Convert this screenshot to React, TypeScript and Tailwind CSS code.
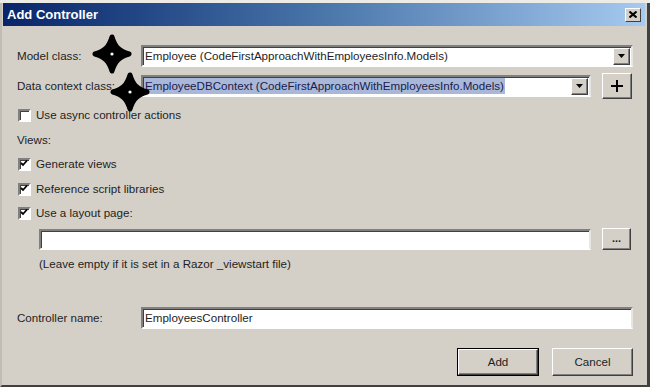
import React from "react";

const sunken =
  "bg-white border-2 border-t-[#808080] border-l-[#808080] border-b-white border-r-[#e8e6e0] shadow-[inset_1px_1px_0_#404040]";
const raised =
  "bg-[#d4d0c8] border border-t-white border-l-white border-b-[#404040] border-r-[#404040] shadow-[inset_-1px_-1px_0_#808080]";

function Arrow() {
  return (
    <div className={`${raised} w-[17px] h-[17px] flex items-center justify-center shrink-0`}>
      <svg width="7" height="4" viewBox="0 0 7 4">
        <path d="M0 0 H7 L3.5 4 Z" fill="#000" />
      </svg>
    </div>
  );
}

function Check({ checked }: { checked: boolean }) {
  return (
    <div className="w-[13px] h-[13px] bg-white border-2 border-t-[#808080] border-l-[#808080] border-b-white border-r-white shadow-[inset_1px_1px_0_#404040] flex items-center justify-center shrink-0">
      {checked && (
        <svg width="9" height="9" viewBox="0 0 9 9" className="-ml-[1px] -mt-[1px]">
          <path d="M1 4 L3 6 L7 1.5" stroke="#000" strokeWidth="1.8" fill="none" />
        </svg>
      )}
    </div>
  );
}

function Star({ className }: { className: string }) {
  return (
    <svg className={className} width="40" height="40" viewBox="-20 -20 40 40">
      <path
        d="M0 -17 C3 -7 7 -3 17 0 C7 3 3 7 0 17 C-3 7 -7 3 -17 0 C-7 -3 -3 -7 0 -17 Z"
        fill="#000"
        stroke="#000"
        strokeWidth="5"
        strokeLinejoin="round"
      />
      <circle cx="0" cy="0" r="1.6" fill="#fff" />
    </svg>
  );
}

export default function App() {
  return (
    <div
      className="w-[650px] h-[387px] bg-[#d4d0c8] relative overflow-hidden text-[11.6px] text-[#1e1e1e]"
      style={{ fontFamily: '"Liberation Sans", Arial, sans-serif' }}
    >
      <div className="h-[3px] bg-[#ecebe6]" />
      <div className="h-[384px] border-l-2 border-l-[#c0bdb5] border-r-[3px] border-r-[#404040] border-b-2 border-b-[#404040] flex flex-col">
        <div className="ml-[1px] mr-[2px] h-[23px] bg-gradient-to-r from-[#0a246a] via-[#4a76aa] to-[#a6caf0] flex items-center justify-between pl-[4px] pr-[4px]">
          <span className="text-white font-bold text-[13px]">Add Controller</span>
          <div className="w-[16px] h-[14px] bg-[#d4d0c8] border border-t-white border-l-white border-b-[#404040] border-r-[#404040] flex items-center justify-center">
            <svg width="8" height="7" viewBox="0 0 8 7">
              <path d="M0.5 0.5 L7.5 6.5 M7.5 0.5 L0.5 6.5" stroke="#000" strokeWidth="2" />
            </svg>
          </div>
        </div>

        <div className="flex flex-col pl-[15px] pr-[14px]">
          <div className="mt-[19px] h-[22px] flex items-center">
            <span className="w-[124px]">Model class:</span>
            <div className={`${sunken} flex-1 h-[22px] flex items-center justify-between pl-[2px] pr-[1px]`}>
              <span>Employee (CodeFirstApproachWithEmployeesInfo.Models)</span>
              <Arrow />
            </div>
          </div>

          <div className="mt-[6px] h-[26px] flex items-center">
            <span className="w-[124px]">Data context class:</span>
            <div className={`${sunken} w-[450px] h-[22px] flex items-center justify-between pl-[1px] pr-[1px]`}>
              <span className="bg-[#a9b8d8] text-[#1b1b4b] px-[1px] leading-[16px]">
                EmployeeDBContext (CodeFirstApproachWithEmployeesInfo.Models)
              </span>
              <Arrow />
            </div>
            <div className={`${raised} ml-[11px] w-[30px] h-[26px] flex items-center justify-center`}>
              <svg width="12" height="12" viewBox="0 0 12 12">
                <path d="M6 0 V12 M0 6 H12" stroke="#000" strokeWidth="2" />
              </svg>
            </div>
          </div>

          <div className="mt-[7px] h-[18px] flex items-center gap-[5px] pl-[1px]">
            <Check checked={false} />
            <span>Use async controller actions</span>
          </div>

          <div className="mt-[7px] h-[18px] flex items-center">
            <span>Views:</span>
          </div>

          <div className="mt-[6px] h-[18px] flex items-center gap-[5px] pl-[1px]">
            <Check checked={true} />
            <span>Generate views</span>
          </div>
          <div className="mt-[7px] h-[18px] flex items-center gap-[5px] pl-[1px]">
            <Check checked={true} />
            <span>Reference script libraries</span>
          </div>
          <div className="mt-[6px] h-[18px] flex items-center gap-[5px] pl-[1px]">
            <Check checked={true} />
            <span>Use a layout page:</span>
          </div>

          <div className="mt-[6px] flex items-center pl-[22px]">
            <div className={`${sunken} w-[552px] h-[21px]`} />
            <div className={`${raised} ml-[11px] w-[29px] h-[22px] flex items-end justify-center pb-[5px] text-[11px] leading-none font-bold`}>
              ...
            </div>
          </div>

          <div className="mt-[6px] h-[16px] flex items-center pl-[22px]">
            <span>(Leave empty if it is set in a Razor _viewstart file)</span>
          </div>

          <div className="mt-[35px] h-[22px] flex items-center">
            <span className="w-[124px]">Controller name:</span>
            <div className={`${sunken} flex-1 h-[22px] flex items-center pl-[2px]`}>
              <span>EmployeesController</span>
            </div>
          </div>

          <div className="mt-[19px] flex justify-end gap-[13px]">
            <div className="border border-black w-[82px] h-[28px]">
              <div className={`${raised} w-full h-full flex items-center justify-center`}>Add</div>
            </div>
            <div className={`${raised} w-[81px] h-[28px] flex items-center justify-center`}>Cancel</div>
          </div>
        </div>
      </div>

      <Star className="absolute left-[92px] top-[34px]" />
      <Star className="absolute left-[110px] top-[72px]" />
    </div>
  );
}
